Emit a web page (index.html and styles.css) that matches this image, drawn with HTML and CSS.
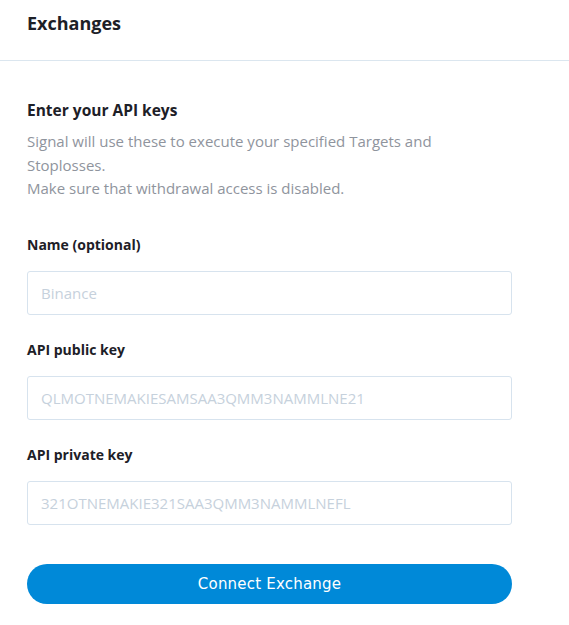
FILE: index.html
```html
<!DOCTYPE html>
<html>
<head>
<meta charset="utf-8">
<link rel="stylesheet" href="styles.css">
</head>
<body>
<div class="page">
  <header class="header"><h1 class="title">Exchanges</h1></header>
  <main class="content">
    <h2 class="subtitle">Enter your API keys</h2>
    <p class="desc">Signal will use these to execute your specified Targets and Stoplosses.<br>Make sure that withdrawal access is disabled.</p>
    <form class="form">
      <label class="field">
        <span class="label">Name (optional)</span>
        <input class="input" type="text" placeholder="Binance">
      </label>
      <label class="field">
        <span class="label">API public key</span>
        <input class="input" type="text" placeholder="QLMOTNEMAKIESAMSAA3QMM3NAMMLNE21">
      </label>
      <label class="field">
        <span class="label">API private key</span>
        <input class="input" type="text" placeholder="321OTNEMAKIE321SAA3QMM3NAMMLNEFL">
      </label>
      <button class="btn" type="button">Connect Exchange</button>
    </form>
  </main>
</div>
</body>
</html>
```
FILE: styles.css
```css
* { box-sizing: border-box; }
html, body { margin: 0; background: #fff; }
body { font-family: "Open Sans", Lato, sans-serif; color: #1d2027; }
.page { width: 569px; }
.header {
  height: 61px;
  padding: 11px 27px 0;
  border-bottom: 1px solid #dbe6ef;
}
.title { margin: 0; font-size: 18px; font-weight: 700; line-height: 24px; }
.content { padding: 37px 27px 0; width: 539px; }
.subtitle { margin: 0; font-size: 15.5px; font-weight: 700; line-height: 24px; }
.desc { margin: 8px 0 0; font-size: 15px; line-height: 23.5px; color: #8f949d; }
.form { display: flex; flex-direction: column; margin-top: 33px; }
.field { display: flex; flex-direction: column; margin-bottom: 24px; }
.label { font-size: 14px; font-weight: 700; line-height: 22px; margin-bottom: 15px; }
.input {
  height: 44px;
  border: 1px solid #d7e3ee;
  border-radius: 3px;
  padding: 0 13px;
  font-family: inherit;
  font-size: 15px;
  color: #1d2027;
  outline: none;
}
.input::placeholder { color: #c6d1dc; }
.btn {
  margin-top: 15px;
  height: 40px;
  border: none;
  border-radius: 20px;
  background: #0089d8;
  color: #fff;
  font-family: "DejaVu Sans", sans-serif;
  font-size: 15px;
  letter-spacing: 0.2px;
}
```
